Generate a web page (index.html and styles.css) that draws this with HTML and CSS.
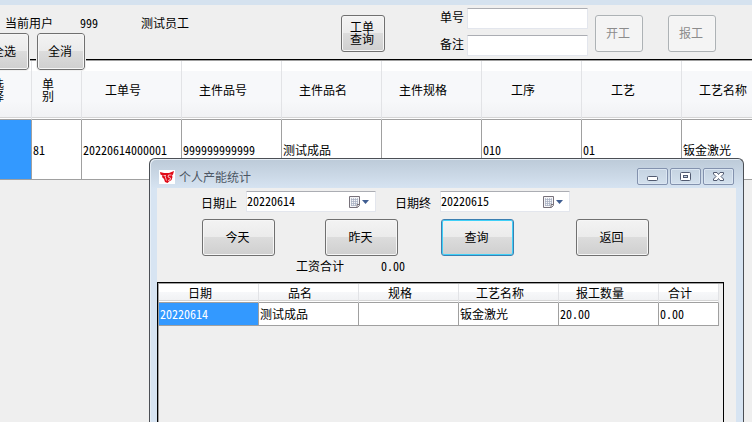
FILE: index.html
```
<!DOCTYPE html>
<html lang="zh-CN">
<head>
<meta charset="utf-8">
<title>个人产能统计</title>
<link rel="stylesheet" href="styles.css">
</head>
<body>
<main class="workspace">
  <header class="toolbar">
    <div class="user">
      <span class="user-label">当前用户</span>
      <span class="user-id">999</span>
      <span>测试员工</span>
    </div>
    <button class="btn btn-order" type="button">工单<br>查询</button>
    <div class="fields">
      <label for="order-no">单号</label><input class="box" id="order-no" type="text">
      <label for="remark">备注</label><input class="box" id="remark" type="text">
    </div>
    <div class="actions">
      <button class="btn btn-small" type="button" disabled>开工</button>
      <button class="btn btn-small" type="button" disabled>报工</button>
    </div>
  </header>
  <div class="selection">
    <button class="btn btn-small" type="button">全选</button>
    <button class="btn btn-small" type="button">全消</button>
  </div>
  <div class="orders">
    <table class="grid orders-grid">
      <colgroup><col class="narrow"><col class="narrow"><col><col><col><col><col><col><col></colgroup>
      <thead>
        <tr><th>选<br>择</th><th>单<br>别</th><th>工单号</th><th>主件品号</th><th>主件品名</th><th>主件规格</th><th>工序</th><th>工艺</th><th>工艺名称</th></tr>
      </thead>
      <tbody>
        <tr><td class="selected"></td><td>81</td><td>20220614000001</td><td>999999999999</td><td>测试成品</td><td></td><td>010</td><td>01</td><td>钣金激光</td></tr>
      </tbody>
    </table>
  </div>
</main>

<section class="dialog" role="dialog" aria-labelledby="dialog-title">
  <header class="titlebar">
    <svg class="logo" viewBox="0 0 16 14" aria-hidden="true">
      <rect width="16" height="14" fill="#fff"/>
      <path d="M1 2l4 1 5 0 5-2-1 3.500-1 1 .500 1.500-1 3-2.500 1.500-1.500 1.500-2.500-1-1-3-2-2 .500-1.500-2-1z" fill="#e00b18"/>
      <path d="M4.500 5.500h2.500M6 6l1.500 4.500M12.500 5h-3l-.500 2 2.500 1-.500 2-2 .500" fill="none" stroke="#fff" stroke-width=".7"/>
    </svg>
    <h1 id="dialog-title">个人产能统计</h1>
    <div class="window-controls">
      <button type="button" aria-label="最小化"><svg viewBox="0 0 29 15"><rect x="9.500" y="7.500" width="10" height="4" rx="1" fill="#fff" stroke="#515a70"/></svg></button>
      <button type="button" aria-label="最大化"><svg viewBox="0 0 29 15"><rect x="9.500" y="3.500" width="10" height="8" rx="1" fill="#fff" stroke="#515a70"/><rect x="12.500" y="6.500" width="4" height="2" fill="#c7d5e4" stroke="#515a70"/></svg></button>
      <button type="button" aria-label="关闭"><svg viewBox="0 0 29 15"><path d="M9.500 3.500h3.500l1.500 2 1.500-2h3.500v1.500l-2.500 2.500 2.500 2.500v1.500h-3.500l-1.500-2-1.500 2h-3.500v-1.500l2.500-2.500-2.500-2.500z" fill="#fff" stroke="#515a70"/></svg></button>
    </div>
  </header>
  <div class="panel">
    <div class="dates">
      <label for="date-from">日期止</label>
      <div class="box date">
        <input id="date-from" type="text" value="20220614">
        <button type="button" aria-label="选择日期"><svg viewBox="0 0 22 14"><path d="M1.500 1.500h10v9l-2 2h-8z" fill="#f6f6f8" stroke="#77717a"/><path d="M3.500 3v8M5.500 3v8M7.500 3v8M9.500 3v6M3 4.500h7M3 6.500h7M3 8.500h7M3 10.500h5" stroke="#a3acbf" stroke-width=".7"/><path d="M11.500 9.500h-2.500v3" fill="#ddd" stroke="#77717a"/><path d="M14 5h7l-3.500 4z" fill="#3f5d91"/></svg></button>
      </div>
      <label for="date-to">日期终</label>
      <div class="box date">
        <input id="date-to" type="text" value="20220615">
        <button type="button" aria-label="选择日期"><svg viewBox="0 0 22 14"><path d="M1.500 1.500h10v9l-2 2h-8z" fill="#f6f6f8" stroke="#77717a"/><path d="M3.500 3v8M5.500 3v8M7.500 3v8M9.500 3v6M3 4.500h7M3 6.500h7M3 8.500h7M3 10.500h5" stroke="#a3acbf" stroke-width=".7"/><path d="M11.500 9.500h-2.500v3" fill="#ddd" stroke="#77717a"/><path d="M14 5h7l-3.500 4z" fill="#3f5d91"/></svg></button>
      </div>
    </div>
    <div class="commands">
      <button class="btn" type="button">今天</button>
      <button class="btn" type="button">昨天</button>
      <button class="btn btn-default" type="button">查询</button>
      <button class="btn" type="button">返回</button>
    </div>
    <div class="total"><span>工资合计</span><output>0.00</output></div>
    <div class="results">
      <table class="grid results-grid">
        <colgroup><col><col><col><col><col><col class="sum"></colgroup>
        <thead>
          <tr><th>日期</th><th>品名</th><th>规格</th><th>工艺名称</th><th>报工数量</th><th>合计</th></tr>
        </thead>
        <tbody>
          <tr><td class="selected">20220614</td><td>测试成品</td><td></td><td>钣金激光</td><td>20.00</td><td>0.00</td></tr>
        </tbody>
      </table>
    </div>
  </div>
</section>
</body>
</html>
```

FILE: styles.css
```
* { box-sizing: border-box; }

html, body { height: 100%; }

body {
  margin: 0;
  overflow: hidden;
  position: relative;
  background: #efefef;
  color: #000;
}

body, button, input {
  font: 12px/12px "Noto Sans CJK SC", sans-serif;
  font-feature-settings: "hwid";
}

.workspace {
  position: relative;
  border-top: 5px solid #d5e2ef;
}

/* Toolbar */
.toolbar {
  display: flex;
  align-items: flex-start;
  height: 54px;
  padding-top: 3px;
}

.user {
  display: flex;
  width: 341px;
  padding: 9px 0 0 5px;
}
.user-label { width: 75px; }
.user-id { width: 61px; }

.fields {
  display: grid;
  grid-template-columns: 27px 121px;
  row-gap: 6px;
  margin-left: 55px;
}
.fields label { padding-top: 3px; }

.box {
  height: 21px;
  border: 1px solid #e3e6ed;
  border-top-color: #abadb3;
  border-radius: 1px;
  background: #fff;
  padding: 0 2px;
}

.actions {
  display: flex;
  gap: 25px;
  margin: 7px 0 0 7px;
}

.btn {
  width: 73px;
  height: 37px;
  padding: 0 2px 2px 0;
  border: 1px solid #707070;
  border-radius: 3px;
  background: linear-gradient(#f3f3f3, #ebebeb 48%, #dcdcdc 50%, #cfcfcf);
  box-shadow: inset 0 0 0 1px #f6f6f6;
  color: #000;
}
.btn:disabled {
  border-color: #adb2b5;
  background: #f4f4f4;
  color: #8c8c8c;
}
.btn-small { width: 48px; }
.btn-order { width: 44px; margin-top: 7px; }
.btn-default {
  border-color: #3c7fb1;
  box-shadow: inset 0 0 0 1px #3fd0f8;
}

.selection {
  position: absolute;
  top: 28px;
  left: -19px;
  display: flex;
  gap: 8px;
}
.selection .btn { outline: 1px solid #efefef; }

/* Data grids */
.grid {
  table-layout: fixed;
  border-collapse: separate;
  border-spacing: 0;
}
.grid col { width: 100px; }
.grid th {
  padding: 0 17px 0 0;
  border-right: 1px solid #e2e3e6;
  border-bottom: 1px solid #a0a0a0;
  font-weight: normal;
}
.grid td {
  padding: 0 0 0 1px;
  border-right: 1px solid #a0a0a0;
  border-bottom: 1px solid #a0a0a0;
  background: #fff;
  white-space: nowrap;
}
.grid .selected { background: #3399ff; color: #fff; }

.orders {
  overflow: hidden;
  border-top: 1px solid #000;
  box-shadow: inset 0 1px #a0a0a0;
  padding-top: 1px;
}
.orders-grid { width: 800px; margin-left: -18px; }
.orders-grid .narrow { width: 50px; }
.orders-grid th {
  height: 59px;
  background: linear-gradient(#fff 10px, #f7f8fa 10px, #f7f8fa 40px, #f1f2f4 56px, #d5d5d5 56px, #d5d5d5 57px, #fff 57px);
}
.orders-grid td { height: 60px; }

/* Statistics window */
.dialog {
  position: absolute;
  top: 158px;
  right: 8px;
  bottom: 0;
  left: 149px;
  display: flex;
  flex-direction: column;
  padding: 0 7px;
  border: 1px solid #4b4f55;
  border-bottom: 0;
  border-radius: 6px 6px 0 0;
  background: linear-gradient(#bccad8, #d7e4f2 30px);
  box-shadow: inset 1px 1px #e6eef6;
}

.titlebar {
  display: flex;
  align-items: center;
  height: 29px;
  padding: 6px 2px 0;
}
.logo { width: 16px; height: 14px; }
.titlebar h1 {
  flex: 1;
  margin: 0 0 0 4px;
  color: #4c5664;
  font-size: 12px;
  font-weight: normal;
}
.window-controls { display: flex; gap: 2px; }
.window-controls button {
  width: 31px;
  height: 17px;
  padding: 0;
  border: 1px solid #8392ae;
  border-radius: 2px;
  background: linear-gradient(#c5d3e1, #d3e0ed);
  box-shadow: inset 0 0 0 1px #dbe6f2;
}
.window-controls svg { display: block; width: 29px; height: 15px; }

.panel {
  flex: 1;
  display: flex;
  flex-direction: column;
  padding-top: 3px;
  background: #efefef;
}

.dates { display: flex; padding-left: 44px; }
.dates label { width: 45px; padding-top: 6px; }
.date {
  display: flex;
  align-items: center;
  width: 130px;
  margin-right: 19px;
  padding: 0 5px 0 0;
}
.date + label { width: 45px; }
.date input {
  flex: 1;
  min-width: 0;
  padding: 0 0 2px;
  border: 0;
  background: none;
}
.date button {
  width: 22px;
  height: 14px;
  padding: 0;
  border: 0;
  background: none;
}
.date svg { display: block; width: 22px; height: 14px; }

.commands {
  display: grid;
  grid-template-columns: 123px 116px 135px 74px;
  margin: 7px 0 0 45px;
}

.total {
  display: flex;
  gap: 37px;
  margin: 4px 0 10px 139px;
}

.results {
  flex: 1;
  width: 567px;
  padding: 1px 0 0 1px;
  border: 1px solid #000;
  border-bottom: 0;
  box-shadow: inset 1px 1px #a0a0a0;
}
.results-grid { width: 560px; }
.results-grid .sum { width: 60px; }
.results-grid th {
  height: 19px;
  background: linear-gradient(#fff 8px, #f7f8fa 8px, #f1f2f4 16px, #d5d5d5 16px, #d5d5d5 17px, #fff 17px);
}
.results-grid td { height: 23px; }
```
